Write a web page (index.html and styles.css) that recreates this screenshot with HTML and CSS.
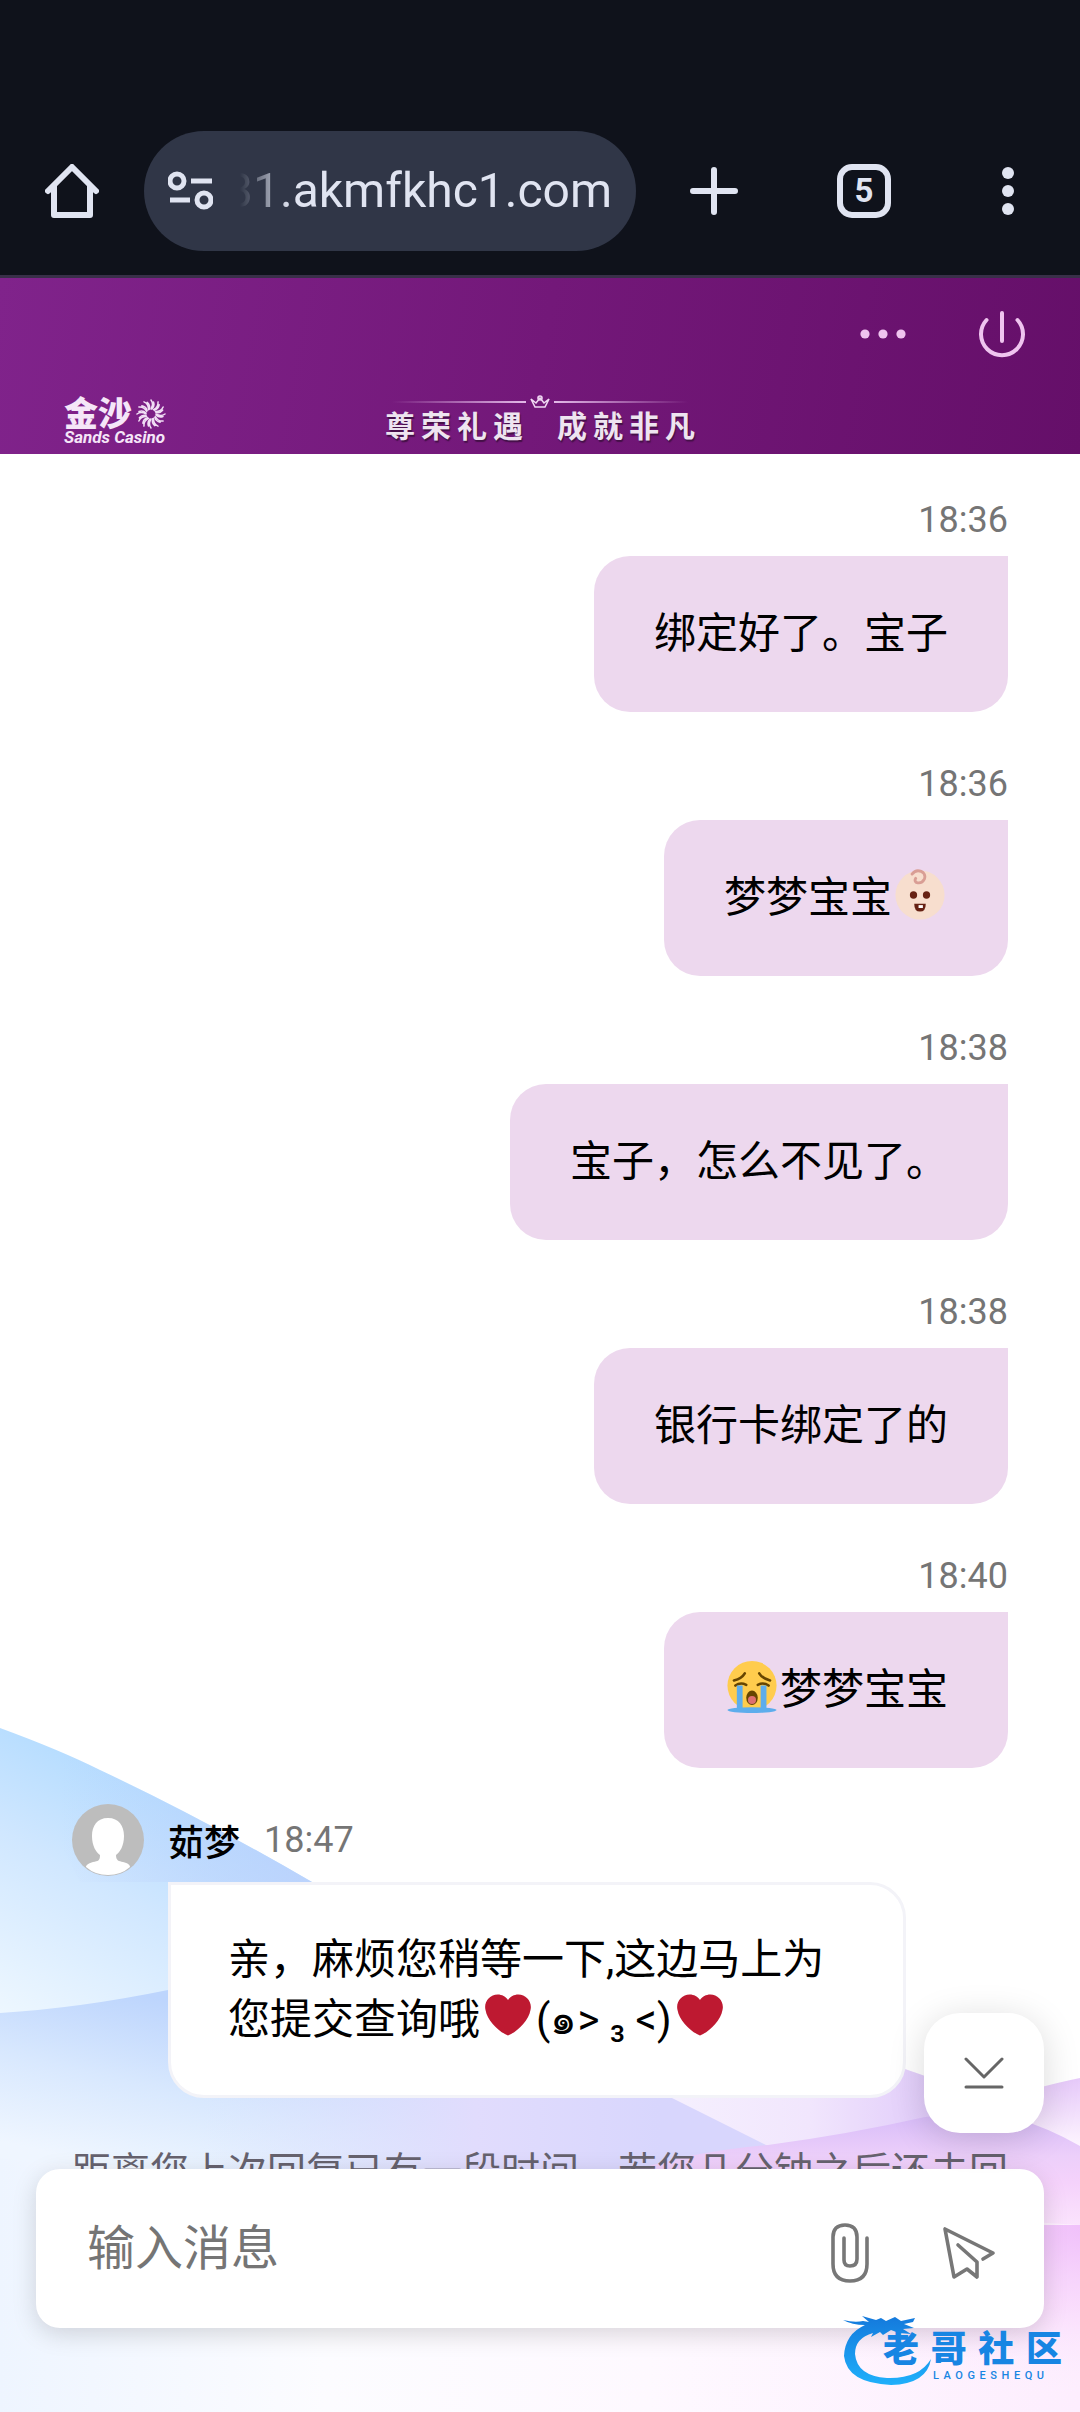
FILE: index.html
```
<!DOCTYPE html>
<html lang="zh-CN">
<head>
    <meta charset="UTF-8">
    <meta name="viewport" content="width=device-width, initial-scale=1.0">
    <title>在线客服</title>
    <link rel="stylesheet" href="styles.css">
</head>
<body>
    <!-- Browser bar -->
    <div class="browser-bar">
        <button class="bar-button" aria-label="Home">
            <svg width="54" height="54" viewBox="0 0 54 54" fill="none" stroke="#e0e4f1" stroke-width="6" stroke-linecap="round" stroke-linejoin="round"><path d="M3 27L27 3L51 27M9 22V51H45V22"/></svg>
        </button>
        <div class="address">
            <svg width="45" height="40" viewBox="0 0 45 40" fill="none" stroke="#e0e4f1" stroke-width="5"><circle cx="9" cy="10" r="7"/><path d="M23 10H44M2 29H22"/><circle cx="36" cy="29" r="7"/></svg>
            <div class="url"><span>31.akmfkhc1.com</span></div>
        </div>
        <button class="bar-button" aria-label="New tab">
            <svg width="48" height="48" viewBox="0 0 48 48" stroke="#e0e4f1" stroke-width="6" stroke-linecap="round"><path d="M3 24H45M24 3V45"/></svg>
        </button>
        <button class="bar-button"><span class="tab-count">5</span></button>
        <button class="bar-button" aria-label="Menu">
            <svg width="12" height="48" viewBox="0 0 12 48" fill="#e0e4f1"><circle cx="6" cy="6" r="6"/><circle cx="6" cy="24" r="6"/><circle cx="6" cy="42" r="6"/></svg>
        </button>
    </div>

    <header class="header">
        <div class="header-actions">
            <button aria-label="More">
                <svg width="46" height="10" viewBox="0 0 46 10" fill="#efc4ef"><circle cx="5" cy="5" r="4.6"/><circle cx="23" cy="5" r="4.6"/><circle cx="41" cy="5" r="4.6"/></svg>
            </button>
            <button aria-label="Exit">
                <svg width="48" height="48" viewBox="0 0 48 48" fill="none" stroke="#efc4ef" stroke-width="4" stroke-linecap="round"><path d="M24 3V31M8.5 10A21 21 0 1 0 39.5 10"/></svg>
            </button>
        </div>
        <div class="brand-row">
            <div class="logo">
                <div class="logo-top">
                    <span>金沙</span>
                    <svg width="30" height="30" viewBox="-15 -15 30 30" fill="none" stroke="#f1dff5" stroke-width="1.5" stroke-linecap="round">
                        <defs><path id="ray" d="M0 -5Q3 -10 0 -14M1 -5Q4 -8 2.5 -12"/></defs>
                        <use href="#ray"/><use href="#ray" transform="rotate(30)"/><use href="#ray" transform="rotate(60)"/><use href="#ray" transform="rotate(90)"/><use href="#ray" transform="rotate(120)"/><use href="#ray" transform="rotate(150)"/><use href="#ray" transform="rotate(180)"/><use href="#ray" transform="rotate(210)"/><use href="#ray" transform="rotate(240)"/><use href="#ray" transform="rotate(270)"/><use href="#ray" transform="rotate(300)"/><use href="#ray" transform="rotate(330)"/>
                    </svg>
                </div>
                <div class="logo-name">Sands Casino</div>
            </div>
            <div class="slogan">
                <div class="slogan-line">
                    <i class="line-left"></i>
                    <svg width="20" height="14" viewBox="0 0 20 14" fill="none" stroke="#f0d8f3" stroke-width="1.6"><path d="M1 4L5 12H15L19 4L14 8L10 3L6 8Z"/><circle cx="10" cy="3" r="2"/></svg>
                    <i class="line-right"></i>
                </div>
                <div class="slogan-text">
                    <div><span>尊</span><span>荣</span><span>礼</span><span>遇</span></div>
                    <div><span>成</span><span>就</span><span>非</span><span>凡</span></div>
                </div>
            </div>
        </div>
    </header>

    <main class="chat">
        <svg class="waves" viewBox="0 0 1080 700" preserveAspectRatio="none">
            <defs>
                <linearGradient id="blue1" gradientUnits="userSpaceOnUse" x1="150" y1="70" x2="20" y2="320"><stop offset="0" stop-color="#b4dcff"/><stop offset="0.4" stop-color="#d0e7ff"/><stop offset="1" stop-color="#eff8ff"/></linearGradient>
                <linearGradient id="blue1b" gradientUnits="userSpaceOnUse" x1="60" y1="0" x2="320" y2="0"><stop offset="0" stop-color="#bcd0fc" stop-opacity="0"/><stop offset="1" stop-color="#bcd0fc" stop-opacity="0.8"/></linearGradient>
                <linearGradient id="blue2" gradientUnits="userSpaceOnUse" x1="130" y1="280" x2="90" y2="450"><stop offset="0" stop-color="#bdd5fd"/><stop offset="0.5" stop-color="#d8e8fe"/><stop offset="1" stop-color="#eff6ff"/></linearGradient>
                <linearGradient id="violet" gradientUnits="userSpaceOnUse" x1="200" y1="0" x2="660" y2="0"><stop offset="0" stop-color="#e2e6fe" stop-opacity="0"/><stop offset="0.6" stop-color="#e1dcfd"/><stop offset="1" stop-color="#d8d6fd"/></linearGradient>
                <linearGradient id="lilac" gradientUnits="userSpaceOnUse" x1="680" y1="0" x2="940" y2="0"><stop offset="0" stop-color="#f5effe"/><stop offset="0.5" stop-color="#f1e6fd"/><stop offset="1" stop-color="#e0cafa"/></linearGradient>
                <linearGradient id="pink1" x1="0" y1="0" x2="0" y2="1"><stop offset="0" stop-color="#e6c9fa"/><stop offset="1" stop-color="#fef6ff"/></linearGradient>
                <linearGradient id="pink2" gradientUnits="userSpaceOnUse" x1="0" y1="405" x2="0" y2="515"><stop offset="0" stop-color="#d9bdf9"/><stop offset="0.35" stop-color="#eccffa"/><stop offset="0.6" stop-color="#f5d2fb"/><stop offset="1" stop-color="#fbe4fd"/></linearGradient>
                <radialGradient id="pink3" gradientUnits="userSpaceOnUse" cx="0" cy="0" r="1" gradientTransform="translate(1100 513) scale(420 170)"><stop offset="0" stop-color="#efbdfa"/><stop offset="0.5" stop-color="#f8d6fc" stop-opacity="0.7"/><stop offset="1" stop-color="#fdeefe" stop-opacity="0"/></radialGradient>
                <linearGradient id="base" x1="0" y1="0" x2="1" y2="0"><stop offset="0" stop-color="#eef5ff"/><stop offset="0.3" stop-color="#fcfcff"/><stop offset="0.6" stop-color="#fef9ff"/><stop offset="1" stop-color="#fdeefe"/></linearGradient>
            </defs>
            <path fill="url(#blue1)" d="M0 16Q60 38 100 58Q200 105 312 170L600 330L768 433V446H0Z"/>
            <path fill="url(#blue1b)" d="M0 16Q60 38 100 58Q200 105 312 170H80Z"/>
            <path fill="url(#blue2)" d="M0 301Q80 296 168 278L660 380L768 433V520H0Z"/>
            <path fill="url(#violet)" d="M200 380H664L768 433V500H200Z"/>
            <path fill="url(#lilac)" d="M640 370L905 357L1000 390V410L768 434Z"/>
            <path fill="url(#pink1)" d="M980 395L1030 378Q1060 370 1080 366V436L1030 412Z"/>
            <path fill="url(#pink2)" d="M600 470Q680 440 768 433Q850 422 925 405L980 400Q1030 405 1080 434V600H600Z"/>
            <path fill="url(#base)" d="M0 446Q40 452 90 452L1080 513V700H0Z"/>
            <path fill="url(#pink3)" d="M600 513H1080V700H600Z"/>
        </svg>

        <div class="messages">
            <div class="message sent">
                <div class="meta"><time>18:36</time></div>
                <p class="bubble">绑定好了。宝子</p>
            </div>
            <div class="message sent">
                <div class="meta"><time>18:36</time></div>
                <p class="bubble">梦梦宝宝<svg class="emoji" viewBox="0 0 36 36"><circle cx="18" cy="18" r="17" fill="#f7dece"/><path d="M12.5 3.500C16 -1 23 2 21 7C19 11 13 10 15 6.500" fill="none" stroke="#d99e95" stroke-width="2" stroke-linecap="round"/><ellipse cx="13.5" cy="18" rx="2.500" ry="2.600" fill="#662113"/><ellipse cx="22.5" cy="18" rx="2.500" ry="2.600" fill="#662113"/><path d="M14 24H22Q22 29.5 18 29.5T14 24Z" fill="#662113"/><path d="M17 25H20V27H17Z" fill="#fff"/></svg></p>
            </div>
            <div class="message sent">
                <div class="meta"><time>18:38</time></div>
                <p class="bubble">宝子，怎么不见了。</p>
            </div>
            <div class="message sent">
                <div class="meta"><time>18:38</time></div>
                <p class="bubble">银行卡绑定了的</p>
            </div>
            <div class="message sent">
                <div class="meta"><time>18:40</time></div>
                <p class="bubble"><svg class="emoji" viewBox="0 0 36 36"><circle cx="18" cy="17" r="17" fill="#ffcc4d"/><path d="M5.5 13.5Q11 12 13 8.5M30.5 13.5Q25 12 23 8.5M6.5 17Q10 14.5 14 16.5M29.5 17Q26 14.5 22 16.5" fill="none" stroke="#664500" stroke-width="1.8" stroke-linecap="round"/><ellipse cx="18" cy="34" rx="17" ry="2" fill="#5dadec"/><path d="M7.5 17H11.5V34H7.5ZM24 17H28V34H24Z" fill="#5dadec"/><ellipse cx="18" cy="25.5" rx="4" ry="5" fill="#664500"/><ellipse cx="18" cy="27" rx="2.8" ry="2.7" fill="#dd6f6f"/></svg>梦梦宝宝</p>
            </div>

            <div class="message received">
                <div class="meta">
                    <svg class="avatar" viewBox="0 0 72 72"><circle cx="36" cy="36" r="36" fill="#bdbdbd"/><path fill="#fff" d="M36 14C47 14 52 22 52 32C52 42 48 48 44 51C44 57 47 57 51 58C56 59 58 61 58 63Q49 71 36 71Q23 71 14 63C14 61 17 59 21 58C26 57 28 57 28 51C24 48 20 42 20 32C20 22 25 14 36 14Z"/></svg>
                    <span class="name">茹梦</span>
                    <time>18:47</time>
                </div>
                <p class="bubble">亲，麻烦您稍等一下,这边马上为您提交查询哦<svg class="emoji heart" viewBox="0 0 36 36"><path fill="#be1931" d="M35.9 11.8C35.9 6.4 31.5 2 26.1 2C22.7 2 19.7 3.7 18 6.3C16.3 3.7 13.3 2 9.9 2C4.5 2 .1 6.4 .1 11.8C.1 12.6 .2 13.3 .4 14C1.8 22.6 11.4 31.6 18 34C24.6 31.6 34.2 22.6 35.6 14C35.8 13.3 35.9 12.6 35.9 11.8Z"/></svg>(๑&gt; ₃ &lt;)<svg class="emoji heart" viewBox="0 0 36 36"><path fill="#be1931" d="M35.9 11.8C35.9 6.4 31.5 2 26.1 2C22.7 2 19.7 3.7 18 6.3C16.3 3.7 13.3 2 9.9 2C4.5 2 .1 6.4 .1 11.8C.1 12.6 .2 13.3 .4 14C1.8 22.6 11.4 31.6 18 34C24.6 31.6 34.2 22.6 35.6 14C35.8 13.3 35.9 12.6 35.9 11.8Z"/></svg></p>
            </div>

            <p class="notice">距离您上次回复已有一段时间，若您几分钟之后还未回</p>
        </div>

        <div class="dock">
            <button class="to-bottom" aria-label="到底部">
                <svg width="40" height="34" viewBox="0 0 40 34" fill="none" stroke="#666" stroke-width="3" stroke-linecap="round" stroke-linejoin="round"><path d="M2 3L20 21L38 3M2 31H38"/></svg>
            </button>
            <form class="composer">
                <input type="text" aria-label="输入消息" placeholder="输入消息">
                <button type="button" aria-label="附件">
                    <svg width="40" height="62" viewBox="0 0 40 62" fill="none" stroke="#777" stroke-width="3.6" stroke-linecap="round"><path d="M14 16V38Q14 44 20 44Q27 44 27 37V15Q27 3 15 3Q3 3 3 15V42Q3 59 20 59Q37 59 37 42V16"/></svg>
                </button>
                <button type="button" aria-label="发送">
                    <svg width="54" height="54" viewBox="0 0 54 54" fill="none" stroke="#777" stroke-width="3.6" stroke-linecap="round" stroke-linejoin="round"><path d="M41 33L51 27L3 3L12 51L25 43L35 51V36L16 19"/></svg>
                </button>
            </form>
        </div>
    </main>

    <!-- Community mark -->
    <div class="watermark">
        <svg viewBox="0 0 90 70">
            <defs><linearGradient id="dragon" x1="0" y1="0" x2="0" y2="1"><stop offset="0" stop-color="#1479dc"/><stop offset="1" stop-color="#1fb0fb"/></linearGradient></defs>
            <path fill="url(#dragon)" d="M0 4Q12 7 20 5L26 6L19 0L33 4L38 2L43 5L52 1L58 5L72 2L70 6L61 8L71 12L60 13L68 18L56 17L48 14L40 19L37 16L28 21L30 17Q12 22 12 38Q14 60 44 62Q76 63 88 43Q84 68 48 69Q4 67 1 40Q2 18 22 9Q9 9 0 4Z"/>
        </svg>
        <div class="watermark-text">
            <div class="watermark-name"><span>老</span><span>哥</span><span>社</span><span>区</span></div>
            <div class="watermark-latin"><span>L</span><span>A</span><span>O</span><span>G</span><span>E</span><span>S</span><span>H</span><span>E</span><span>Q</span><span>U</span></div>
        </div>
    </div>
</body>
</html>
```

FILE: styles.css
```
* {
    box-sizing: border-box;
}

body {
    font-family: Roboto, "Noto Sans CJK SC", sans-serif;
    margin: 0;
    min-height: 100vh;
    display: flex;
    flex-direction: column;
    position: relative;
    background: #fff;
}

button {
    display: flex;
    align-items: center;
    justify-content: center;
    background: none;
    border: none;
    padding: 0;
    font-family: inherit;
    cursor: pointer;
}

svg {
    flex-shrink: 0;
}

/* Browser bar */
.browser-bar {
    display: flex;
    align-items: center;
    padding: 131px 0 24px;
    background: #0f121b;
    border-bottom: 3px solid #392f49;
}

.bar-button {
    flex-shrink: 0;
    width: 144px;
    height: 120px;
}

.bar-button:nth-of-type(2) {
    width: 156px;
}

.address {
    flex: 1;
    min-width: 0;
    display: flex;
    align-items: center;
    gap: 27px;
    height: 120px;
    padding: 0 24px;
    border-radius: 60px;
    background: #303647;
}

.url {
    flex: 1;
    min-width: 0;
    display: flex;
    justify-content: flex-end;
    overflow: hidden;
    color: #e0e4f1;
    font-size: 48px;
    line-height: 60px;
    mask-image: linear-gradient(to right, transparent, #000 50px);
}

.tab-count {
    width: 54px;
    height: 54px;
    border: 6px solid #e0e4f1;
    border-radius: 15px;
    color: #e0e4f1;
    font-size: 33px;
    font-weight: 700;
    line-height: 42px;
}

/* Page header */
.header {
    height: 176px;
    display: flex;
    flex-direction: column;
    justify-content: space-between;
    background: linear-gradient(100deg, #80238b, #731879 50%, #650f69);
}

.header-actions {
    display: flex;
    justify-content: flex-end;
    align-items: center;
    gap: 72px;
    padding: 32px 54px 0;
}

.brand-row {
    display: grid;
    grid-template-columns: 1fr auto 1fr;
    align-items: end;
    padding: 0 64px 9px;
}

.logo {
    color: #f5e6f8;
}

.logo-top {
    display: flex;
    align-items: center;
    gap: 4px;
    font-size: 34px;
    font-weight: 900;
    line-height: 30px;
}

.logo-name {
    font-size: 17px;
    font-style: italic;
    font-weight: 700;
    line-height: 16px;
}

.slogan-line {
    display: flex;
    align-items: center;
    justify-content: center;
    gap: 4px;
}

.slogan-line i {
    width: 134px;
    height: 2px;
}

.line-left {
    background: linear-gradient(to right, transparent, #e3b9e8);
}

.line-right {
    background: linear-gradient(to left, transparent, #e3b9e8);
}

.slogan-text {
    display: flex;
    justify-content: center;
    gap: 34px;
    color: #eee4f0;
    font-size: 30px;
    font-weight: 700;
    line-height: 36px;
    text-shadow: 1px 2px 1px #451048;
}

.slogan-text div {
    display: flex;
    gap: 6px;
}

/* Chat */
.chat {
    flex: 1;
    display: flex;
    flex-direction: column;
    position: relative;
    overflow: hidden;
}

.waves {
    position: absolute;
    left: 0;
    bottom: 0;
    width: 100%;
    height: 700px;
}

.messages {
    position: relative;
    flex: 1 1 0;
    min-height: 0;
    overflow: hidden;
    display: flex;
    flex-direction: column;
    gap: 36px;
    padding: 30px 72px 0;
}

.message {
    display: flex;
    flex-direction: column;
    align-items: flex-end;
}

.received {
    align-items: flex-start;
}

.meta {
    display: flex;
    align-items: center;
    gap: 24px;
    height: 72px;
    color: #757575;
    font-size: 36px;
}

.received .meta {
    margin-bottom: 6px;
}

.avatar {
    width: 72px;
    height: 72px;
}

.name {
    color: #000;
    font-weight: 500;
}

.bubble {
    margin: 0;
    padding: 48px 60px;
    border-radius: 36px 0 36px 36px;
    background: #edd8ee;
    color: #000;
    font-size: 42px;
    line-height: 60px;
}

.received .bubble {
    margin: 0 102px 0 96px;
    padding: 45px 57px;
    border: 3px solid #f3f3f8;
    border-radius: 0 36px 36px 36px;
    background: #fff;
}

.emoji {
    width: 52px;
    height: 52px;
    margin: 0 2px;
    vertical-align: -9px;
}

.heart {
    width: 46px;
    height: 46px;
    margin: 0 5px;
    vertical-align: -4px;
}

.notice {
    margin: 8px 0 0;
    color: #66626e;
    font-size: 39px;
    line-height: 60px;
    text-align: center;
    white-space: nowrap;
}

/* Input area */
.dock {
    position: relative;
    padding: 0 36px 84px;
}

.to-bottom {
    position: absolute;
    right: 36px;
    bottom: calc(100% + 36px);
    width: 120px;
    height: 120px;
    border-radius: 36px;
    background: #fff;
    box-shadow: 0 6px 36px rgba(0, 0, 0, 0.15);
}

.composer {
    display: flex;
    align-items: center;
    gap: 72px;
    height: 159px;
    padding: 0 48px 0 51px;
    border-radius: 24px;
    background: #fff;
    box-shadow: 0 6px 24px rgba(0, 0, 0, 0.15);
}

.composer button {
    margin-top: 8px;
}

.composer input {
    flex: 1;
    min-width: 0;
    height: 72px;
    padding: 0;
    border: none;
    outline: none;
    background: none;
    color: #000;
    font-family: inherit;
    font-size: 48px;
}

.composer input::placeholder {
    color: #757575;
}

.watermark {
    position: absolute;
    right: 18px;
    bottom: 26px;
    width: 219px;
    height: 70px;
}

.watermark svg {
    position: absolute;
    width: 90px;
    height: 70px;
}

.watermark-text {
    position: relative;
    padding: 14px 0 0 40px;
    color: #1785e3;
}

.watermark-name {
    display: flex;
    justify-content: space-between;
    font-size: 36px;
    font-weight: 900;
    line-height: 40px;
}

.watermark-latin {
    display: flex;
    justify-content: space-between;
    padding: 0 18px 0 50px;
    font-size: 11px;
    font-weight: 500;
    line-height: 12px;
}
```
